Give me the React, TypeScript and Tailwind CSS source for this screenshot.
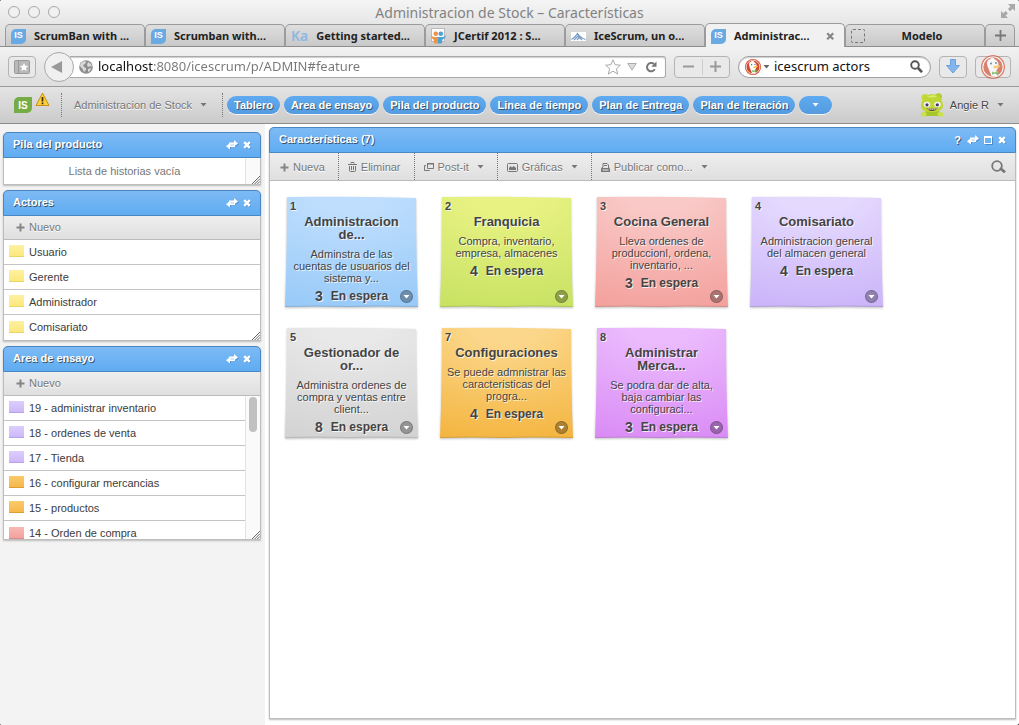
import type { ReactNode } from "react";

const chromeFont = "font-['Noto_Sans','Open_Sans',sans-serif]";
const etched = "[text-shadow:0_1px_0_#fff]";
const headText = "text-[11px] font-bold text-white [text-shadow:1px_1px_0_#3a546e]";

/* ---------- icons ---------- */

const Caret = ({ className = "text-[#777]" }: { className?: string }) => (
  <svg width="7" height="4" viewBox="0 0 7 4" className={`shrink-0 ${className}`} aria-hidden="true">
    <path d="M0.5 0h6L3.5 3.6z" fill="currentColor" />
  </svg>
);

const Plus = () => (
  <svg width="9" height="9" viewBox="0 0 9 9" className="shrink-0" aria-hidden="true">
    <path d="M3.5 0.5h2v3h3v2h-3v3h-2v-3h-3v-2h3z" fill="#858585" />
  </svg>
);

const Swap = () => (
  <svg width="13" height="10" viewBox="0 0 13 10" aria-hidden="true">
    <path d="M4 3.500h4.500V1L13 4.500 8.500 7.500V6H5v3.500L1 7l4-3z" fill="#3a6fa5" opacity=".5" />
    <path d="M3 2.500h5V0l4 3.500-4 3V5H3z" fill="#fff" />
    <path d="M9 7H4v2.500L0 6.300 4 3v2h5z" fill="#fff" />
    <path d="M4.500 5H8" stroke="#8fc0ee" strokeWidth=".8" />
  </svg>
);

const Cross = () => (
  <svg width="9" height="9" viewBox="0 0 9 9" aria-hidden="true">
    <path d="M2 2l5.500 5.500M7.500 2L2 7.500" stroke="#3a6fa5" strokeWidth="2" opacity=".6" />
    <path d="M1.200 1.200l5.600 5.600M6.800 1.200L1.200 6.800" stroke="#fff" strokeWidth="2.400" />
  </svg>
);

const Maximize = () => (
  <svg width="9" height="9" viewBox="0 0 9 9" aria-hidden="true">
    <path d="M8.500 1.500v7h-7" stroke="#3a6fa5" fill="none" opacity=".6" />
    <path d="M0 0h8v8H0zM1 2v5h6V2z" fill="#fff" fillRule="evenodd" />
  </svg>
);

const Trash = () => (
  <svg width="9" height="10" viewBox="0 0 9 10" aria-hidden="true">
    <path d="M3 1.500V.5h3v1M0 2.500h9M1.500 4v4.500q0 1 1 1h4q1 0 1-1V4M3.500 4v4M5.500 4v4" stroke="#777" strokeWidth="1" fill="none" />
  </svg>
);

const PostIt = () => (
  <svg width="10" height="9" viewBox="0 0 10 9" aria-hidden="true">
    <path d="M3.500.5h6v5h-6zM2 2.500H.5v5h5V7" stroke="#777" fill="none" />
    <path d="M3 0h7v1.500H3z" fill="#777" />
  </svg>
);

const Picture = () => (
  <svg width="11" height="9" viewBox="0 0 11 9" aria-hidden="true">
    <rect x=".5" y=".5" width="10" height="8" rx="1" fill="none" stroke="#777" />
    <path d="M2 7V5l1.500-2L5 4.500 6.500 3 8 4l1 1v2z" fill="#777" />
  </svg>
);

const Printer = () => (
  <svg width="9" height="9" viewBox="0 0 9 9" aria-hidden="true">
    <path d="M2 4V.5h4L7.500 2v2" fill="none" stroke="#777" />
    <path d="M3 2.500h3" stroke="#777" />
    <path d="M1 4h1v1h5V4h1l1 2v3H0V6z" fill="#777" />
    <path d="M1.500 7h6" stroke="#eee" />
  </svg>
);

const Globe = () => (
  <svg width="14" height="14" viewBox="0 0 14 14" aria-hidden="true" className="shrink-0">
    <circle cx="7" cy="7" r="6.800" fill="#8d8d8d" />
    <path d="M1 5l2-3 3-1 1 1-1 2-2 1 1 2 2 1v2l-2 2-1-2L3 8 1.500 7zM9 2l3 2 1 3-2-1-2 1-1-2zM9 9l3-1-1 3-2 1z" fill="#d9d9d9" />
  </svg>
);

const Grip = () => (
  <svg width="8" height="8" viewBox="0 0 9 9" className="absolute right-0 bottom-0" aria-hidden="true">
    <path d="M0 9L9 0M3 9l6-6M6 9l3-3" stroke="#666" strokeWidth="1.100" />
  </svg>
);

const Duck = ({ size }: { size: number }) => (
  <svg width={size} height={size} viewBox="0 0 24 24" aria-hidden="true" className="shrink-0">
    <circle cx="12" cy="12" r="12" fill="#d14a2b" />
    <circle cx="12" cy="12" r="10.200" fill="none" stroke="#fff" strokeWidth="1.100" />
    <path d="M6 7.500C6.500 4.500 9 3.500 12 4c4 .5 5.500 3 5.500 6.500 0 2-1 3.500-2 4.500l.5 6q-3 1-5.500.3C9.500 17 6 12 6 7.500z" fill="#fff" />
    <path d="M9 3.500l3-1 2 2-3 .5z" fill="#fff" />
    <circle cx="10" cy="8.500" r="1" fill="#2d4f8e" />
    <circle cx="15" cy="8" r=".9" fill="#2d4f8e" />
    <path d="M12.500 11.500c2-1.500 5-1 7-.8-.5 1.500-3 1.800-4 2.300-1 .8-3.500.5-3-1.500z" fill="#f8c230" />
    <path d="M11 16.500l2.500 1 3.500-1.700.5 4-4-1-2.500 1z" fill="#59b146" />
  </svg>
);

const IsLogo = ({ green = false }: { green?: boolean }) => (
  <span
    className={`flex shrink-0 items-center justify-center rounded-tl-[5px] rounded-br-[5px] font-['Liberation_Sans',Arial,sans-serif] font-bold text-white ${
      green ? "h-4 w-[18px] bg-[#76ac45] text-[10px]" : "size-[15px] bg-[#6aaae4] text-[9px]"
    }`}
  >
    IS
  </span>
);

const JCertifIcon = () => (
  <svg width="15" height="16" viewBox="0 0 15 16" aria-hidden="true" className="shrink-0">
    <rect x=".5" y=".5" width="13" height="13" fill="#fafafa" stroke="#bbb" />
    <circle cx="4.800" cy="5.800" r="2.300" fill="#eb9347" />
    <circle cx="9.800" cy="5.800" r="2.300" fill="#4ba3d4" />
    <path d="M0 7c1 1.500 2 2 4 2h3v6.500H4c-1.500 0-1-3-1.500-4C1 10.500 0 9 0 7z" fill="#eb9347" />
    <path d="M15 7c-1 1.500-2 2-4 2H7v6.500h3c1.500 0 1-3 1.500-4C13.500 10.500 15 9 15 7z" fill="#4ba3d4" />
  </svg>
);

const MountainIcon = () => (
  <svg width="15" height="9" viewBox="0 0 15 9" aria-hidden="true" className="shrink-0">
    <rect width="15" height="9" fill="#fff" />
    <path d="M.5 7.500Q4.500 5 6.500 1.500 9 5.500 14.500 7.500M3 8l4-4 4 4M6 8l3-3.500" fill="none" stroke="#7b9cc4" strokeWidth="1.300" />
  </svg>
);

const Avatar = () => (
  <svg width="24" height="24" viewBox="0 0 24 24" aria-hidden="true">
    <circle cx="5" cy="4.500" r="3.500" fill="#c3d93c" />
    <circle cx="18.500" cy="3.800" r="3.500" fill="#b3cd30" />
    <path d="M6 17h13l1.500 6h-16z" fill="#a5c62c" />
    <path d="M3 6C6 0 17-.5 20.500 5c1.500 3 3 6 2.500 8.500-.8 4-5 5.500-11 5.500S1.500 18 1.200 13.500C1 10.500 2 8 3 6z" fill="#bfd736" />
    <path d="M7 4q5-3 10-.5-5 1.500-10 .5z" fill="#dbeb6b" />
    <path d="M1 20l3.500-1.500L7 21l-2 2.500H1zM23 20l-3.500-1.500L17 21l2 2.500h4z" fill="#cbe04a" />
    <ellipse cx="7" cy="11.500" rx="3.300" ry="2.800" fill="#f4f1fa" />
    <ellipse cx="17.500" cy="11.500" rx="3.300" ry="2.800" fill="#f4f1fa" />
    <circle cx="7" cy="11.800" r="1.600" fill="#4d3a57" />
    <circle cx="17.300" cy="11.800" r="1.600" fill="#4d3a57" />
    <path d="M6.500 15q5.500 1 11 0-1.500 3-5.500 3t-5.500-3z" fill="#5c4426" />
    <path d="M7.500 15.800q4.500.8 9 0" stroke="#fff" fill="none" strokeDasharray="1.500 .5" />
  </svg>
);

/* ---------- browser window ---------- */

const tabs: { label: string; icon: ReactNode; active?: boolean; center?: boolean }[] = [
  { label: "ScrumBan with ...", icon: <IsLogo /> },
  { label: "Scrumban with...", icon: <IsLogo /> },
  { label: "Getting started...", icon: <span className="text-[14px] leading-none font-semibold text-[#8fb7e2]">Ka</span> },
  { label: "JCertif 2012 : S...", icon: <JCertifIcon /> },
  { label: "IceScrum, un o...", icon: <MountainIcon /> },
  { label: "Administrac...", icon: <IsLogo />, active: true },
  { label: "Modelo", icon: <span className="size-[14px] shrink-0 rounded-[2px] border border-dashed border-[#777]" />, center: true },
];

function TitleBar() {
  return (
    <div className={`relative flex h-6 items-center justify-center ${chromeFont} text-[14px] text-[#828282]`}>
      <div className="absolute left-2 flex gap-2">
        {["Cerrar", "Minimizar", "Ampliar"].map((l) => (
          <button key={l} aria-label={l} className="size-3 rounded-full border border-[#aaa] bg-[#f1f1f1]" />
        ))}
      </div>
      <h1>Administracion de Stock – Características</h1>
      <button aria-label="Pantalla completa" className="absolute top-1 right-1">
        <svg width="14" height="14" viewBox="0 0 14 14" aria-hidden="true">
          <path d="M7 0h7v7l-2.300-2.300-2.500 2.500L6.900 4.900l2.500-2.500zM0 7l2.300 2.300 2.300-2.300 2.300 2.300-2.300 2.300L7 14H0z" fill="#a9a9a9" />
        </svg>
      </button>
    </div>
  );
}

function TabStrip() {
  return (
    <div className={`flex h-[23px] items-end border-b border-[#8e8e8e] pr-1 pl-[5px] ${chromeFont}`}>
      {tabs.map((t) => (
        <button
          key={t.label}
          className={`flex min-w-0 flex-1 items-center gap-2 rounded-t-[5px] border border-b-0 border-[#9b9b9b] px-[5px] pt-px text-[11px] font-bold text-[#222] ${
            t.active ? "-mb-px h-[24px] bg-[#f1f1f1]" : "h-[22px] bg-linear-to-b from-[#dedede] to-[#c9c9c9]"
          }`}
        >
          {t.icon}
          <span className={`flex-1 whitespace-nowrap ${t.center ? "pr-2 text-center" : "text-left"}`}>{t.label}</span>
          {t.active && (
            <svg width="9" height="9" viewBox="0 0 9 9" className="mr-1 shrink-0" aria-hidden="true">
              <path d="M1.200 1.200l6 6M7.200 1.200l-6 6" stroke="#858585" strokeWidth="2.200" />
            </svg>
          )}
        </button>
      ))}
      <button
        aria-label="Nueva pestaña"
        className="flex h-[22px] w-[30px] items-center justify-center rounded-t-[5px] border border-b-0 border-[#9b9b9b] bg-linear-to-b from-[#dedede] to-[#c9c9c9]"
      >
        <svg width="11" height="11" viewBox="0 0 11 11" aria-hidden="true">
          <path d="M5.500 0v11M0 5.500h11" stroke="#777" strokeWidth="1.800" />
        </svg>
      </button>
    </div>
  );
}

const chromeButton = "flex h-[22px] shrink-0 items-center justify-center rounded-[4px] border border-[#b3b3b3] bg-[#e9e9e9]";

function NavBar() {
  return (
    <div className={`flex h-10 items-center border-b border-[#9a9a9a] bg-linear-to-b from-[#f1f1f1] to-[#dedede] pr-2 pl-2 ${chromeFont}`}>
      <button aria-label="Marcadores" className={`${chromeButton} w-7`}>
        <svg width="16" height="14" viewBox="0 0 16 14" aria-hidden="true">
          <rect x=".5" y=".5" width="15" height="13" rx="1" fill="#b9b9b9" stroke="#999" />
          <path d="M4.500 1v12" stroke="#999" />
          <path d="M10 3l1.300 2.700 2.900.3-2.200 2 .6 3-2.600-1.500L7.400 11 8 8 5.800 6l2.900-.3z" fill="#fff" />
        </svg>
      </button>
      <button aria-label="Atrás" className="relative ml-2 flex size-[30px] shrink-0 items-center justify-center rounded-full border border-[#a9a9a9] bg-[#f0f0f0]">
        <svg width="12" height="14" viewBox="0 0 13 14" className="mr-1" aria-hidden="true">
          <path d="M0 7L12 .5v13z" fill="#999" />
        </svg>
      </button>
      <div className="-ml-1 flex h-[22px] min-w-0 flex-1 items-center gap-[5px] rounded-r-[3px] border border-l-0 border-[#a9a9a9] bg-white pr-2 pl-[9px] shadow-[inset_0_1px_1px_#ccc]">
        <Globe />
        <input
          aria-label="Dirección"
          defaultValue="localhost:8080/icescrum/p/ADMIN#feature"
          className="min-w-0 flex-1 bg-[linear-gradient(90deg,#111_55px,#777_55px)] bg-clip-text text-[13px] text-transparent outline-none"
        />
        <svg width="16" height="16" viewBox="0 0 16 16" aria-hidden="true">
          <path d="M8 .8l2.100 4.900 5.300.5-4 3.500 1.200 5.300L8 12.200 3.400 15l1.200-5.300-4-3.500 5.300-.5z" fill="#fff" stroke="#aaa" />
        </svg>
        <svg width="10" height="8" viewBox="0 0 10 8" className="ml-px" aria-hidden="true">
          <path d="M.8.5h8.400L5 7z" fill="#ddd" stroke="#aaa" />
        </svg>
        <svg width="12" height="12" viewBox="0 0 12 12" className="ml-[3px]" aria-hidden="true">
          <path d="M9 3A4.200 4.200 0 1 0 9.800 8.300" fill="none" stroke="#777" strokeWidth="2" />
          <path d="M11.500.5v5.300H6.300z" fill="#777" />
        </svg>
      </div>
      <div className={`${chromeButton} ml-2 w-14`}>
        <button aria-label="Reducir" className="flex flex-1 justify-center">
          <svg width="11" height="11" viewBox="0 0 11 11" aria-hidden="true"><path d="M0 5.500h11" stroke="#999" strokeWidth="2" /></svg>
        </button>
        <span className="h-4 w-px bg-[#ccc]" />
        <button aria-label="Ampliar texto" className="flex flex-1 justify-center">
          <svg width="11" height="11" viewBox="0 0 11 11" aria-hidden="true"><path d="M0 5.500h11M5.500 0v11" stroke="#999" strokeWidth="2" /></svg>
        </button>
      </div>
      <div className="ml-2 flex h-[22px] w-[193px] shrink-0 items-center rounded-full border border-[#a0a0a0] bg-white pr-[7px] pl-[6px] shadow-[inset_0_1px_1px_#ccc]">
        <Duck size={16} />
        <Caret className="mr-1 ml-[2px] text-[#666]" />
        <input aria-label="Buscar en la web" defaultValue="icescrum actors" className="min-w-0 flex-1 text-[13px] text-[#111] outline-none" />
        <svg width="13" height="13" viewBox="0 0 13 13" aria-hidden="true">
          <circle cx="5" cy="5" r="3.800" fill="none" stroke="#555" strokeWidth="1.900" />
          <path d="M8 8l4 4.200" stroke="#555" strokeWidth="2.600" />
        </svg>
      </div>
      <button aria-label="Descargas" className={`${chromeButton} ml-2 w-7`}>
        <svg width="14" height="15" viewBox="0 0 14 15" aria-hidden="true">
          <path d="M4.500.5h5v6h4L7 14 .5 6.500h4z" fill="#82b6ec" stroke="#6ba0da" />
        </svg>
      </button>
      <button aria-label="DuckDuckGo" className={`${chromeButton} ml-2 w-9`}>
        <span className="opacity-65"><Duck size={24} /></span>
      </button>
    </div>
  );
}

/* ---------- application ---------- */

const pills = ["Tablero", "Area de ensayo", "Pila del producto", "Linea de tiempo", "Plan de Entrega", "Plan de Iteración"];
const pill = "flex h-[18px] items-center rounded-full bg-linear-to-b from-[#5faaf0] to-[#549be0] shadow-[0_1px_0_#f5f5f5]";

function AppBar() {
  return (
    <header className="flex h-[37px] items-center border-b border-[#8e8e8e] bg-linear-to-b from-[#e4e4e4] to-[#cbcbcb] pr-[15px] pl-[14px] text-[11px]">
      <IsLogo green />
      <svg width="15" height="15" viewBox="0 0 15 15" className="mb-3 ml-[3px]" aria-hidden="true">
        <path d="M7.500 1L14 13.500H1z" fill="#fbd03b" stroke="#c98f17" strokeLinejoin="round" />
        <path d="M7.500 5v4.500M7.500 10.500v1.800" stroke="#3b2c0c" strokeWidth="1.700" />
      </svg>
      <span className="ml-[11px] h-6 border-l border-dotted border-[#777]" />
      <button className={`ml-3 flex items-center gap-2 text-[#777] ${etched}`}>
        Administracion de Stock <Caret />
      </button>
      <span className="mr-1 ml-[15px] h-6 border-l border-dotted border-[#777]" />
      <nav className="flex gap-1">
        {pills.map((p) => (
          <a key={p} href={`#${p}`} className={`${pill} ${headText} px-[7px] whitespace-nowrap`}>{p}</a>
        ))}
        <button aria-label="Más" className={`${pill} w-[33px] justify-center`}><Caret className="text-white" /></button>
      </nav>
      <button className={`ml-auto flex items-center text-[#444] ${etched}`}>
        <Avatar />
        <span className="mr-2 ml-1.5">Angie R</span>
        <Caret />
      </button>
    </header>
  );
}

function PanelHeader({ title, full = false }: { title: string; full?: boolean }) {
  return (
    <div className="-mx-px -mt-px flex h-[26px] items-center rounded-t-[5px] border border-[#4a87c2] bg-linear-to-b from-[#7dbaf5] to-[#5facf2] pr-2 pl-[9px]">
      <h2 className={`${headText} pb-px`}>{title}</h2>
      <div className="ml-auto flex items-center gap-1">
        {full && <button aria-label="Ayuda" className={`${headText} mr-0.5`}>?</button>}
        <button aria-label="Mover"><Swap /></button>
        {full && <button aria-label="Maximizar" className="mr-px"><Maximize /></button>}
        <button aria-label="Cerrar panel"><Cross /></button>
      </div>
    </div>
  );
}

const NewBar = () => (
  <div className="flex h-6 items-center border-b border-[#bbb] bg-linear-to-b from-[#eee] to-[#dfdfdf] pl-3">
    <button className={`flex items-center gap-1 text-[#777] ${etched}`}><Plus />Nuevo</button>
  </div>
);

const swatches = {
  yellow: "from-[#fdf0a0] to-[#fde87d] border-[#e9d566]",
  violet: "from-[#ddcdfd] to-[#ccb8f8] border-[#b7a1ea]",
  orange: "from-[#fbca69] to-[#f5b84b] border-[#dd9f31]",
  red: "from-[#f8b8b4] to-[#f3a29e] border-[#e28c88]",
};
type Swatch = keyof typeof swatches;

const Item = ({ text, color }: { text: string; color: Swatch }) => (
  <li className="flex h-[25px] shrink-0 items-center gap-[5px] border-b border-[#c4c4c4] pl-[5px] text-[#3c3c3c] last:border-b-0">
    <span className={`mb-0.5 h-3 w-[15px] border-b bg-linear-to-b ${swatches[color]}`} />
    {text}
  </li>
);

const panel = "relative rounded-t-[5px] border border-[#bdbdbd] bg-white shadow-[0_1px_2px_#bbb]";

const trial: [string, Swatch][] = [
  ["19 - administrar inventario", "violet"],
  ["18 - ordenes de venta", "violet"],
  ["17 - Tienda", "violet"],
  ["16 - configurar mercancias", "orange"],
  ["15 - productos", "orange"],
  ["14 - Orden de compra", "red"],
];

function Sidebar() {
  return (
    <aside className="flex w-[265px] shrink-0 flex-col gap-[5px] bg-[#f3f3f3] pt-2 pr-1 pl-[3px] text-[11px]">
      <section className={panel}>
        <PanelHeader title="Pila del producto" />
        <div className="flex h-[26px]">
          <p className="flex-1 self-center text-center text-[#777]">Lista de historias vacía</p>
          <span className="w-[15px] border-l border-[#e3e3e3] bg-[#fafafa]" />
        </div>
        <Grip />
      </section>
      <section className={panel}>
        <PanelHeader title="Actores" />
        <NewBar />
        <ul>
          {["Usuario", "Gerente", "Administrador", "Comisariato"].map((a) => <Item key={a} text={a} color="yellow" />)}
        </ul>
        <Grip />
      </section>
      <section className={panel}>
        <PanelHeader title="Area de ensayo" />
        <NewBar />
        <div className="flex h-[143px] overflow-hidden">
          <ul className="flex flex-1 flex-col">
            {trial.map(([t, c]) => <Item key={t} text={t} color={c} />)}
          </ul>
          <div className="w-[15px] border-l border-[#e3e3e3] bg-[#fafafa] pt-px pl-[3px]">
            <div className="h-[35px] w-2 rounded-full bg-[#c1c1c1]" />
          </div>
        </div>
        <Grip />
      </section>
    </aside>
  );
}

const notes = [
  { id: 1, title: "Administracion\nde...", text: "Adminstra de las\ncuentas de usuarios del\nsistema y...", n: 3, light: "#bfdefd", dark: "#98caf8" },
  { id: 2, title: "Franquicia", text: "Compra, inventario,\nempresa, almacenes", n: 4, light: "#e8f283", dark: "#c8e263" },
  { id: 3, title: "Cocina General", text: "Lleva ordenes de\nproduccionl, ordena,\ninventario, ...", n: 3, light: "#f9c9c7", dark: "#f3a19d" },
  { id: 4, title: "Comisariato", text: "Administracion general\ndel almacen general", n: 4, light: "#e5dafe", dark: "#cbb4f9" },
  { id: 5, title: "Gestionador de\nor...", text: "Administra ordenes de\ncompra y ventas entre\nclient...", n: 8, light: "#e9e9e9", dark: "#d3d3d3" },
  { id: 7, title: "Configuraciones", text: "Se puede admnistrar las\ncaracteristicas del\nprogra...", n: 4, light: "#fbd78c", dark: "#f4b540" },
  { id: 8, title: "Administrar\nMerca...", text: "Se podra dar de alta,\nbaja cambiar las\nconfiguraci...", n: 3, light: "#ebbbfd", dark: "#da8cf5" },
];

function Note({ note }: { note: (typeof notes)[number] }) {
  return (
    <article className="relative h-[111px] w-[133px] pt-[2px] text-center text-[11px] leading-3 whitespace-pre-line text-[#444] [text-shadow:1px_1px_0_rgba(255,255,255,0.8)]">
      <svg className="absolute inset-0 -z-10 overflow-visible drop-shadow-[0_1px_1px_rgba(0,0,0,0.25)]" width="133" height="111" viewBox="0 0 133 111" aria-hidden="true">
        <defs>
          <radialGradient id={`paper-${note.id}`} gradientUnits="userSpaceOnUse" cx="66" cy="-10" r="125" gradientTransform="translate(-33 0) scale(1.500 1)">
            <stop offset="0.2" stopColor={note.light} />
            <stop offset="1" stopColor={note.dark} />
          </radialGradient>
        </defs>
        <path d="M2 0Q60-1 131 1 131 60 133 110 90 109 65 110 30 109 0 110 2 60 2 0z" fill={`url(#paper-${note.id})`} />
        <path d="M0 109.500Q30 108.500 65 109.500 90 108.500 133 109.500" fill="none" stroke="#000" strokeOpacity=".12" />
      </svg>
      <div className="pl-[5px] text-left leading-[14px] font-bold">{note.id}</div>
      <h3 className="mt-[2px] text-[13px] leading-[13px] font-bold">{note.title}</h3>
      <p className="mt-[7px]">{note.text}</p>
      <p className="mt-[5px] flex justify-center gap-2 text-[12px] leading-[14px] font-bold">
        <span className="text-[14px]">{note.n}</span>En espera
      </p>
      <button aria-label={`Menú de ${note.title}`} className="absolute right-[5px] bottom-[5px] flex size-[13px] items-center justify-center rounded-full border border-black/20 bg-black/30">
        <Caret className="text-white" />
      </button>
    </article>
  );
}

const tools: { label: string; icon: ReactNode; menu?: boolean }[] = [
  { label: "Nueva", icon: <Plus /> },
  { label: "Eliminar", icon: <Trash /> },
  { label: "Post-it", icon: <PostIt />, menu: true },
  { label: "Gráficas", icon: <Picture />, menu: true },
  { label: "Publicar como...", icon: <Printer />, menu: true },
];

function Features() {
  return (
    <main className={`${panel} isolate mt-[3px] mr-[3px] mb-[6px] ml-1 flex min-w-0 flex-1 flex-col`}>
      <PanelHeader title="Características (7)" full />
      <div className="flex h-7 items-center border-b border-[#bbb] bg-linear-to-b from-[#eee] to-[#dfdfdf] pr-[9px] pl-px text-[11px]">
        {tools.map((t) => (
          <button
            key={t.label}
            className={`flex h-full items-center gap-1 border-l border-dotted border-[#777] pt-px pr-[13px] pl-[9px] whitespace-nowrap text-[#777] first:border-l-0 ${etched}`}
          >
            {t.icon}
            {t.label}
            {t.menu && <Caret className="ml-1 text-[#777]" />}
          </button>
        ))}
        <button aria-label="Buscar" className="ml-auto">
          <svg width="15" height="13" viewBox="0 0 15 13" aria-hidden="true">
            <circle cx="6" cy="6" r="4.800" fill="none" stroke="#777" strokeWidth="1.800" />
            <path d="M9 8l5 4.300" stroke="#777" strokeWidth="2.800" />
          </svg>
        </button>
      </div>
      <div className="flex flex-wrap content-start gap-x-[22px] gap-y-5 pt-4 pr-24 pl-[15px]">
        {notes.map((n) => <Note key={n.id} note={n} />)}
      </div>
    </main>
  );
}

export default function App() {
  return (
    <div className="bg-black">
      <div className="flex min-h-screen flex-col overflow-hidden rounded-[2px] bg-white font-['Liberation_Sans',Arial,sans-serif]">
        <div className="bg-linear-to-b from-[#f5f5f5] to-[#d8d8d8]">
          <TitleBar />
          <TabStrip />
        </div>
        <NavBar />
        <AppBar />
        <div className="flex flex-1">
          <Sidebar />
          <Features />
        </div>
      </div>
    </div>
  );
}
